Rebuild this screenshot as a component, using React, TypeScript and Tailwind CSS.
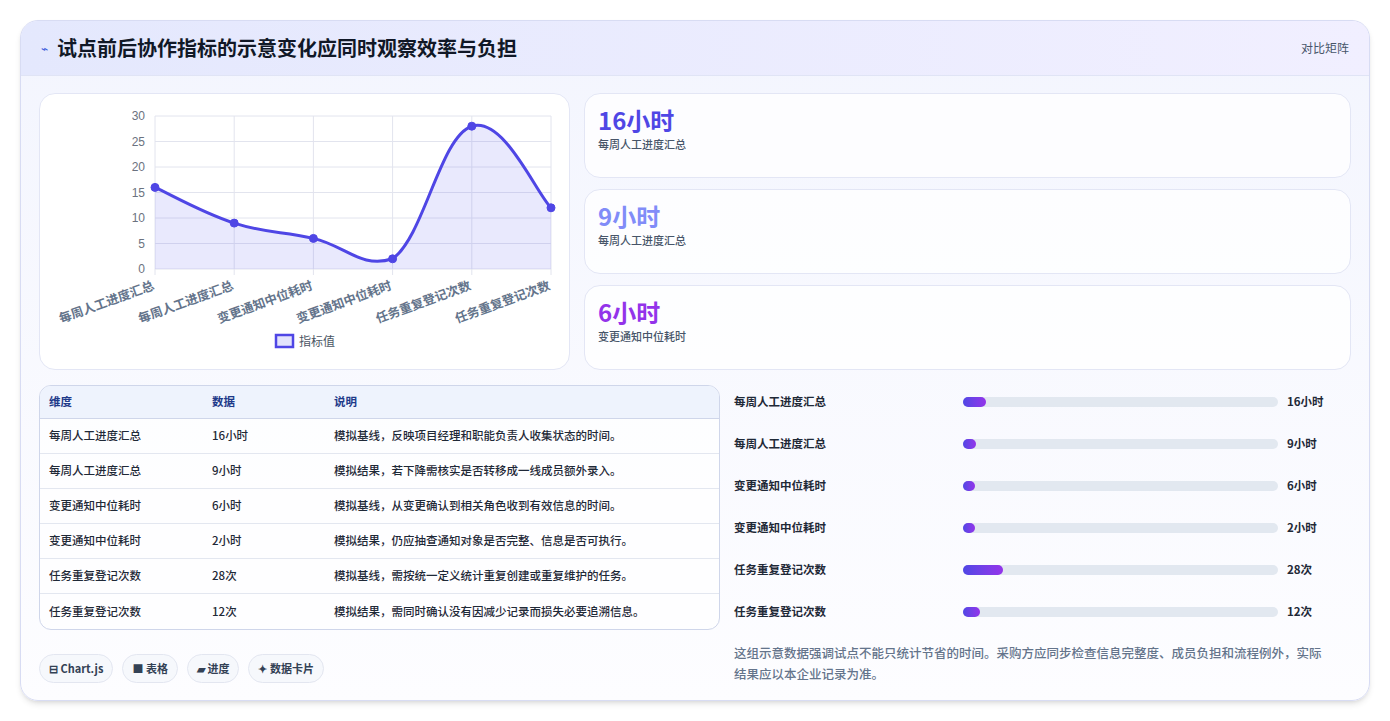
import React from 'react';

const font = { fontFamily: '"Noto Sans CJK SC", "Noto Sans", sans-serif' };

const data = [
  { label: '每周人工进度汇总', value: 16, unit: '小时', note: '模拟基线，反映项目经理和职能负责人收集状态的时间。' },
  { label: '每周人工进度汇总', value: 9, unit: '小时', note: '模拟结果，若下降需核实是否转移成一线成员额外录入。' },
  { label: '变更通知中位耗时', value: 6, unit: '小时', note: '模拟基线，从变更确认到相关角色收到有效信息的时间。' },
  { label: '变更通知中位耗时', value: 2, unit: '小时', note: '模拟结果，仍应抽查通知对象是否完整、信息是否可执行。' },
  { label: '任务重复登记次数', value: 28, unit: '次', note: '模拟基线，需按统一定义统计重复创建或重复维护的任务。' },
  { label: '任务重复登记次数', value: 12, unit: '次', note: '模拟结果，需同时确认没有因减少记录而损失必要追溯信息。' },
];

// Line chart drawn by hand (Chart.js look)
function LineChart() {
  const x0 = 115, x1 = 511, yTop = 22, yBot = 175;
  const pts = data.map((d, i) => [x0 + (i * (x1 - x0)) / 5, yBot - (d.value * (yBot - yTop)) / 30]);
  let path = `M${pts[0][0]},${pts[0][1]}`;
  for (let i = 0; i < pts.length - 1; i++) {
    const p0 = pts[i - 1] || pts[i];
    const p1 = pts[i];
    const p2 = pts[i + 1];
    const p3 = pts[i + 2] || p2;
    const t = 0.4 / 2;
    const c1 = [p1[0] + (p2[0] - p0[0]) * t, p1[1] + (p2[1] - p0[1]) * t];
    const c2 = [p2[0] - (p3[0] - p1[0]) * t, p2[1] - (p3[1] - p1[1]) * t];
    path += ` C${c1[0]},${Math.min(c1[1], yBot)} ${c2[0]},${Math.min(c2[1], yBot)} ${p2[0]},${p2[1]}`;
  }
  const area = `${path} L${x1},${yBot} L${x0},${yBot} Z`;
  return (
    <svg width="531" height="277" viewBox="0 0 531 277">
      {[0, 5, 10, 15, 20, 25, 30].map((v) => {
        const y = yBot - (v * (yBot - yTop)) / 30;
        return (
          <g key={v}>
            <line x1={x0} x2={x1} y1={y} y2={y} stroke="#e2e4ee" />
            <text x={x0 - 10} y={y + 4} textAnchor="end" fontSize="12" fill="#6b7280" fontFamily="Liberation Sans, sans-serif">{v}</text>
          </g>
        );
      })}
      {pts.map((p, i) => (
        <line key={i} x1={p[0]} x2={p[0]} y1={yTop} y2={yBot + 6} stroke="#e2e4ee" />
      ))}
      <path d={area} fill="rgba(99,102,241,0.14)" />
      <path d={path} fill="none" stroke="#4f46e5" strokeWidth="3" />
      {pts.map((p, i) => (
        <circle key={i} cx={p[0]} cy={p[1]} r="4" fill="#4f46e5" stroke="#4f46e5" />
      ))}
      {pts.map((p, i) => (
        <text key={i} x={p[0]} y={yBot + 20} textAnchor="end" fontSize="12.5" fontWeight="600" fill="#64748b" transform={`rotate(-20 ${p[0]} ${yBot + 20})`} style={font}>{data[i].label}</text>
      ))}
      <rect x="236" y="241" width="17" height="12" fill="rgba(99,102,241,0.18)" stroke="#4f46e5" strokeWidth="2.5" />
      <text x="259" y="252" fontSize="12" fill="#4b5563" style={font}>指标值</text>
    </svg>
  );
}

function StatCard({ value, label, color }: { value: string; label: string; color: string }) {
  return (
    <div className="flex-1 rounded-2xl border border-[#e3e6f5] bg-white/80 px-[13px] pt-[9px]">
      <div className={`text-[24px] font-bold leading-[33px] ${color}`}>{value}</div>
      <div className="text-[11px] font-medium text-[#475569]">{label}</div>
    </div>
  );
}

export default function App() {
  return (
    <div className="min-h-screen bg-white p-5" style={font}>
      <div className="h-[681px] overflow-hidden rounded-[18px] border border-[#d8dcf3] bg-gradient-to-b from-[#f3f5fe] to-[#fdfdff] shadow-md">
        <div className="flex h-[55px] items-center justify-between border-b border-[#e0e4f5] bg-gradient-to-r from-[#e4e8fd] to-[#f1efff] px-5">
          <div className="flex items-center gap-[9px]">
            <span className="text-[12px] text-[#3b5bdb]">⌁</span>
            <h1 className="text-[20px] font-bold text-[#111827]">试点前后协作指标的示意变化应同时观察效率与负担</h1>
          </div>
          <span className="text-[12px] text-[#475569]">对比矩阵</span>
        </div>
        <div className="pl-[18px] pr-[18px] pt-[17px]">
          <div className="flex gap-[14px]">
            <div className="h-[277px] w-[531px] shrink-0 rounded-2xl border border-[#e3e6f5] bg-white">
              <LineChart />
            </div>
            <div className="flex flex-1 flex-col gap-[11px]">
              <StatCard value="16小时" label="每周人工进度汇总" color="text-[#4f46e5]" />
              <StatCard value="9小时" label="每周人工进度汇总" color="text-[#818cf8]" />
              <StatCard value="6小时" label="变更通知中位耗时" color="text-[#9333ea]" />
            </div>
          </div>
          <div className="mt-[15px] flex gap-[14px]">
            <div className="w-[681px] shrink-0">
              <div className="overflow-hidden rounded-xl border border-[#cfd6ea] bg-white/70">
                <div className="grid h-[33px] grid-cols-[163px_122px_1fr] items-center border-b border-[#cfd6ea] bg-[#eef3fd] px-[9px] text-[11.5px] font-semibold text-[#1e3a8a]">
                  <span>维度</span><span>数据</span><span>说明</span>
                </div>
                {data.map((d, i) => (
                  <div key={i} className={`grid h-[35px] grid-cols-[163px_122px_1fr] items-center px-[9px] text-[11.5px] font-medium text-[#1f2937] ${i < 5 ? 'border-b border-[#e3e7f0]' : ''}`}>
                    <span>{d.label}</span>
                    <span>{d.value}{d.unit}</span>
                    <span>{d.note}</span>
                  </div>
                ))}
              </div>
              <div className="mt-[24px] flex gap-[9px]">
                {['⊟ Chart.js', '■ 表格', '▰ 进度', '✦ 数据卡片'].map((c) => (
                  <span key={c} className="rounded-full border border-[#e3e6f0] bg-[#f6f8fc] px-[9px] py-[5px] text-[11px] font-semibold text-[#334155]">{c}</span>
                ))}
              </div>
            </div>
            <div className="flex-1">
              <div className="flex flex-col gap-[24px] pt-[8px]">
                {data.map((d, i) => (
                  <div key={i} className="flex h-[18px] items-center">
                    <span className="w-[229px] text-[11.5px] font-semibold text-[#1f2937]">{d.label}</span>
                    <div className="h-[10px] w-[315px] rounded-full bg-[#e2e8f0]">
                      <div className="h-full rounded-full bg-gradient-to-r from-[#4f46e5] to-[#9333ea]" style={{ width: `${Math.max((d.value / 220) * 100, 3.8)}%` }} />
                    </div>
                    <span className="ml-[9px] text-[11.5px] font-bold text-[#1f2937]">{d.value}{d.unit}</span>
                  </div>
                ))}
              </div>
              <p className="mt-[21px] pr-[20px] text-[12.5px] font-medium leading-[21px] text-[#64748b]">这组示意数据强调试点不能只统计节省的时间。采购方应同步检查信息完整度、成员负担和流程例外，实际结果应以本企业记录为准。</p>
            </div>
          </div>
        </div>
      </div>
    </div>
  );
}
